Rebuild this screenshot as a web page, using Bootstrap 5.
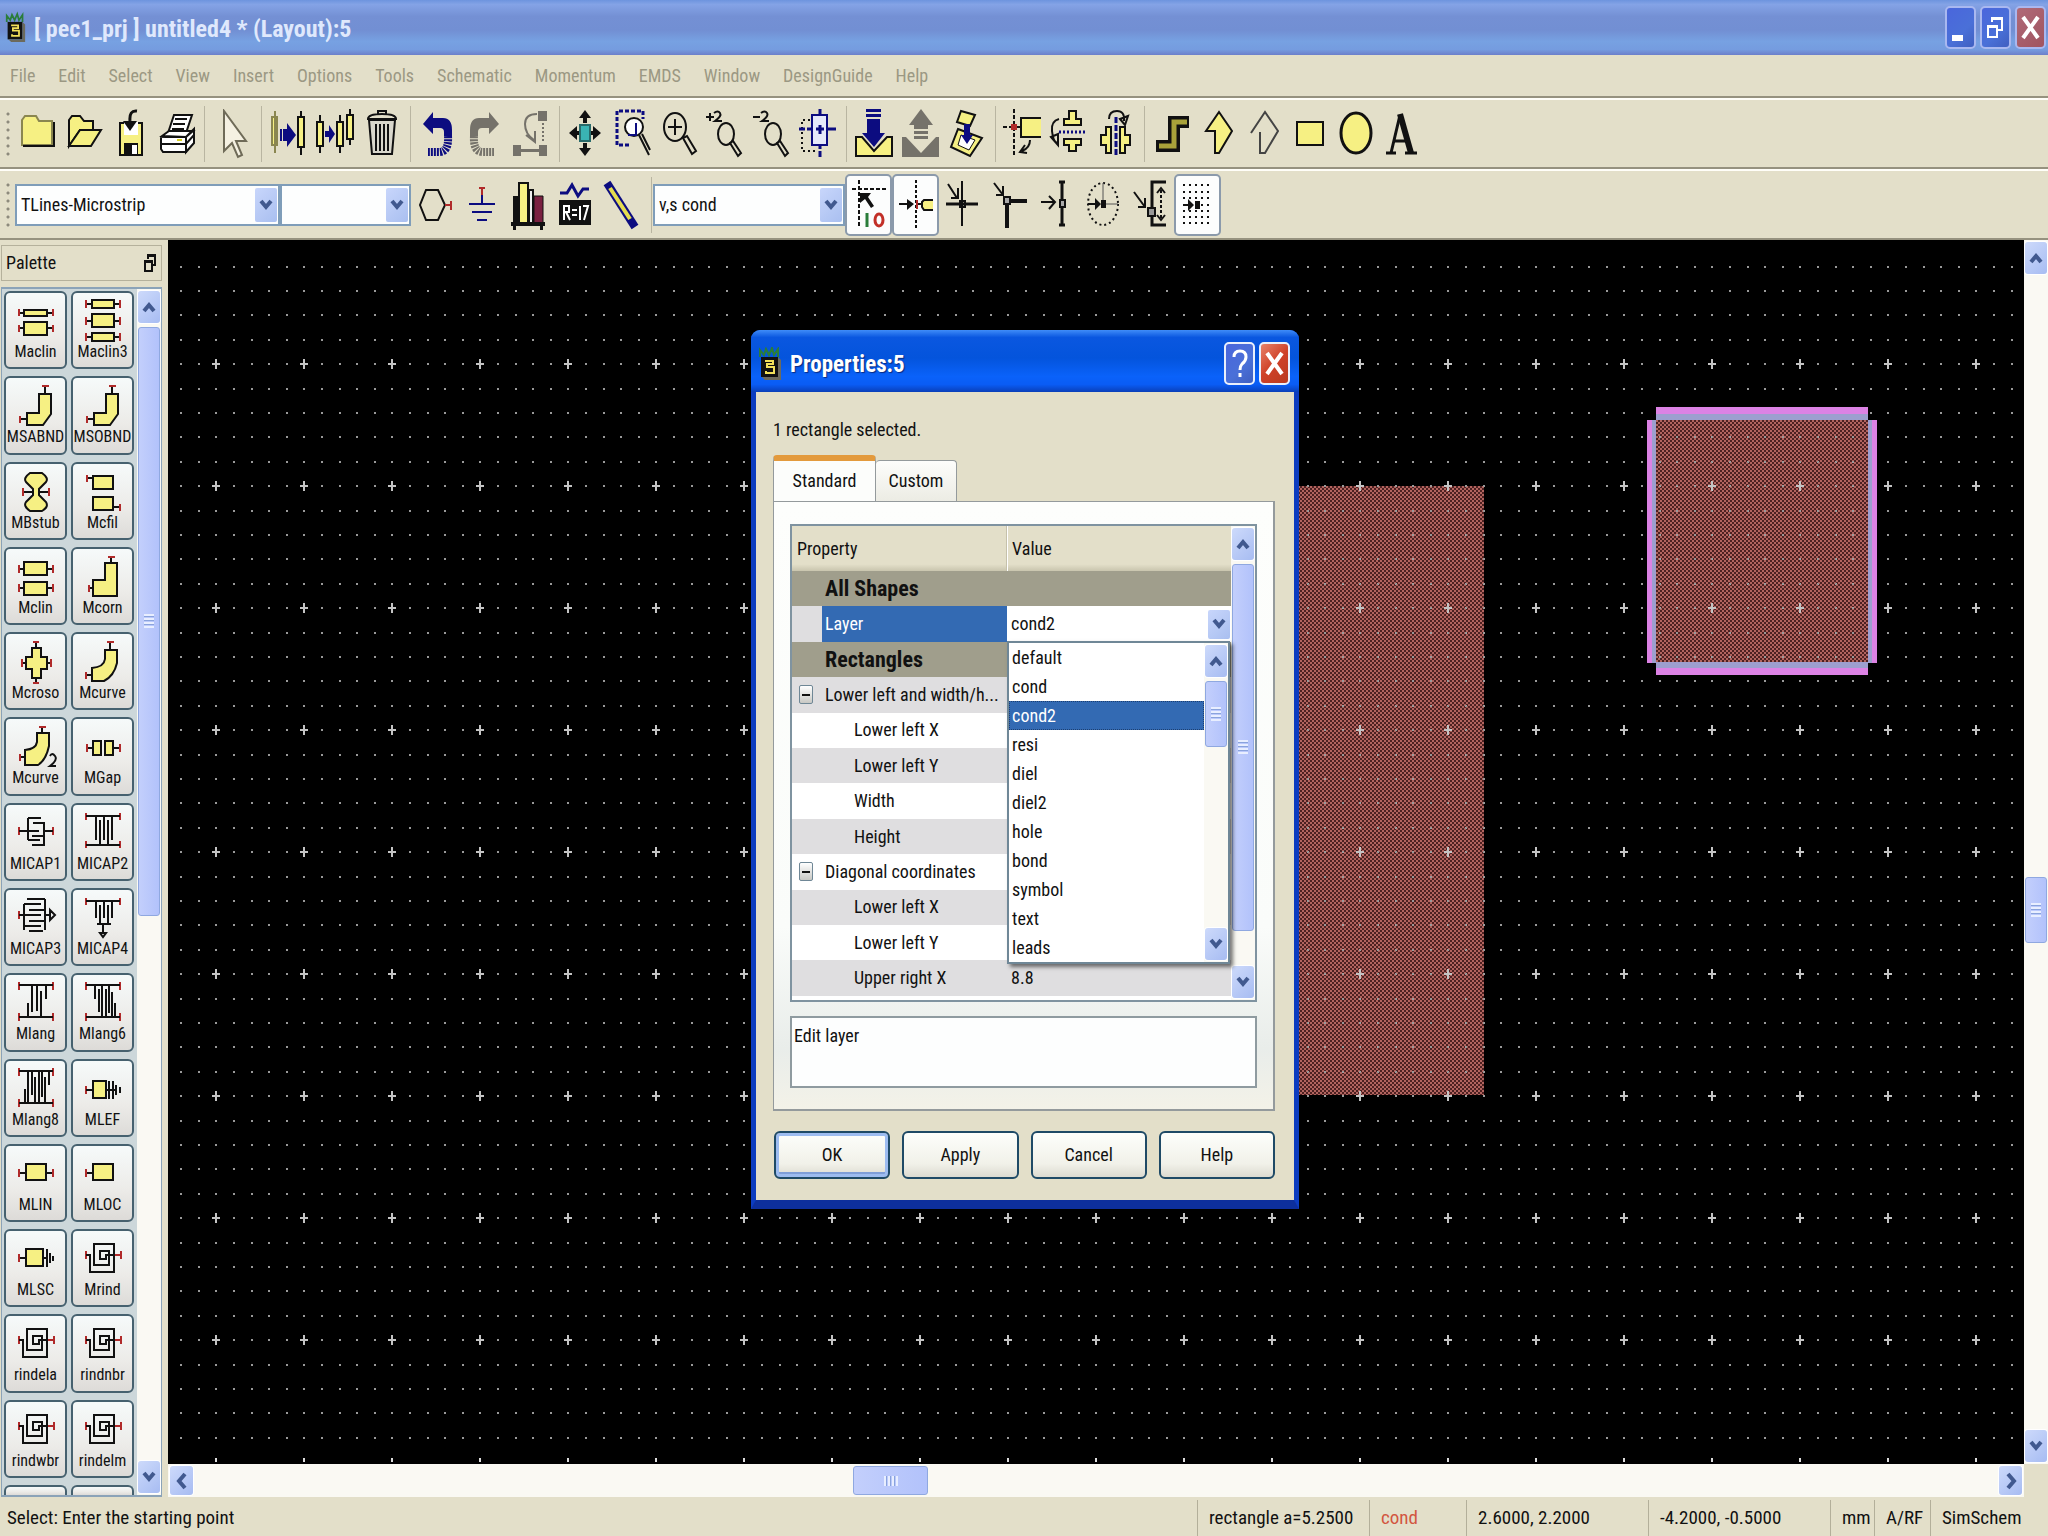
<!DOCTYPE html>
<html lang="en">
<head>
<meta charset="utf-8">
<meta name="viewport" content="width=device-width, initial-scale=1">
<title>[ pec1_prj ] untitled4 * (Layout):5</title>
<link rel="stylesheet" href="https://cdn.jsdelivr.net/npm/bootstrap@5.3.0/dist/css/bootstrap.min.css">
<style>
:root{--face:#e3dfc9;--line:#8f8c7e;--navy:#0c0c80}
body{font-family:"Roboto Condensed",Roboto,"Liberation Sans",sans-serif;font-size:18px;line-height:24px;color:#111;background:var(--face);overflow:hidden;white-space:nowrap}
button,select,input,textarea{font:inherit;color:inherit}
svg{display:block}
.y{fill:#f6f083;stroke:#111;stroke-width:2}
.k{fill:none;stroke:#111;stroke-width:2}
.b{fill:#111}
.r{fill:none;stroke:#b02a2a;stroke-width:2}
.n{fill:none;stroke:var(--navy);stroke-width:2}
.nf{fill:var(--navy)}
.g{fill:none;stroke:#75726a;stroke-width:2}
.gf{fill:#75726a}
.w{fill:#fff;stroke:#111;stroke-width:2}
/* title bar */
.titlebar{height:55px;padding:0 2px 0 5px;background:linear-gradient(#6d94de,#84a3e6 8%,#7490d4 30%,#728fd3 55%,#77a1e2 75%,#759cdf 90%,#6c7fca)}
.titlebar h1{font-size:24px;line-height:28px;padding-top:3px;font-weight:700;color:#dfe8fc}
.winbtn{width:31px;height:43px;padding:0;border:2px solid #a9b8f0;border-radius:5px;background:linear-gradient(135deg,#4a66dc,#4a70d8 60%,#3f5fc0)}
.winbtn.shut{background:linear-gradient(135deg,#b06a78,#a05460)}
/* menus and tool bars */
.menus{height:43px;padding:0 10px;gap:23px;border-bottom:2px solid #96927f;color:#9b9883}
.menus a{color:inherit;text-decoration:none}
.tools{height:71px;border-top:2px solid #fffef8;border-bottom:2px solid #96927f}
.grip{width:15px;height:48px;background:radial-gradient(circle at 8px 4px,#8d8a7c 1px,transparent 2px) 0 0/15px 8px}
.tool{width:46px;height:62px;padding:0;border:2px solid transparent;background:none;border-radius:5px;display:flex;align-items:center;justify-content:center}
.tool svg{flex:none}
.tool.on{background:#fcfdfd;border-color:#8b9aab}
.rule{width:11px;height:56px;background:linear-gradient(#b9b5a1,#b9b5a1) 5px 0/1px 100% no-repeat}
.parts-bar .tool{width:47px}
.parts-bar .rule{width:7px}
.combo{position:relative;height:42px;border:2px solid #7f9db9;background:#fdfefe}
.combo select{appearance:none;width:100%;height:100%;border:0;padding:0 26px 0 4px;background:transparent;outline:0}
.drop{position:absolute;right:1px;top:2px;bottom:2px;width:22px;border-radius:2px;background:linear-gradient(135deg,#c8d6fb,#a9bff0);display:flex;align-items:center;justify-content:center;pointer-events:none}
.c1{width:265px}.c2{width:131px}.c3{width:192px}
/* scroll bars */
.sbar{display:flex;flex:none;background:#faf9f3}
.sbar.v{flex-direction:column;width:24px;padding:2px 1px}
.sbar.h{height:33px;padding:2px}
.sbtn{flex:none;border:0;padding:0;border-radius:3px;background:linear-gradient(135deg,#cddafb,#a7bcf2);display:flex;align-items:center;justify-content:center;box-shadow:0 0 0 1px #fff}
.v>.sbtn{width:100%;height:32px}
.h>.sbtn{height:100%;width:23px}
.knob{flex:none;border-radius:3px;border:1px solid #8fa8e0;background:linear-gradient(90deg,#c3cffc,#b2c2fb);display:flex;align-items:center;justify-content:center}
.knob i{display:block;width:10px;height:14px;background:repeating-linear-gradient(#e8eeff 0 2px,#8aa3dc 2px 3px,transparent 3px 4px)}
.h .knob i{width:14px;height:10px;background:repeating-linear-gradient(90deg,#e8eeff 0 2px,#8aa3dc 2px 3px,transparent 3px 4px)}
/* palette */
.side{width:168px;padding:5px 6px 0 1px}
.sidehead{height:36px;border:1px solid #b5b19c;padding:0 4px;margin-bottom:6px}
.palette{border:1px solid #8ba3b8;border-width:2px 1px;background:#ccd7da;min-height:0}
.partgrid{display:grid;grid-template-columns:63px 63px;grid-template-rows:repeat(14,minmax(0,1fr)) 10px;column-gap:4px;padding:2px 3px 0 2px;overflow:hidden}
.part{margin-bottom:7px;padding:0;border:2px solid #46616f;border-radius:6px;background:linear-gradient(#f6fafa,#ecebe8 60%,#dddbd8);font-size:16px;line-height:18px;display:flex;flex-direction:column;align-items:center;overflow:hidden}
.part:nth-last-child(-n+2){margin-bottom:0;border-bottom:0;border-radius:6px 6px 0 0}
.part svg{flex:none;overflow:visible}
/* canvas */
.stage{background:#000}
.stage>svg{position:absolute;inset:0}
/* dialog */
.dlg{position:absolute;left:583px;top:90px;width:548px;border-radius:9px 9px 0 0;background:#0a49d8;border:5px solid #0c3cc0;border-top:0;border-bottom-width:9px;border-bottom-color:#0d2f9c}
.dlghead{height:62px;margin:0 -5px;padding:5px 9px 0 7px;border-radius:9px 9px 0 0;background:linear-gradient(#3f8cf8,#0a57e0 12%,#0454dc 45%,#0a62fa 75%,#0a5cf4 88%,#0a3fb8)}
.dlghead h2{font-size:23px;line-height:28px;padding-top:3px;font-weight:700;color:#fff;text-shadow:1px 1px 1px #0a2a80}
.dlghead .winbtn{border-color:#e9effc}
.dlghead .shut{background:linear-gradient(135deg,#e8826a,#cf4128 50%,#b93a20)}
.dlgbody{background:var(--face);padding:26px 19px 21px 17px}
.tabs{margin-top:14px;height:45px}
.tabs button{padding:0;border:1px solid #949a9c;border-bottom:0;border-radius:4px 4px 0 0;background:linear-gradient(#fdfdfb,#ececE4)}
.tabs .t1{width:103px;height:46px;border-top:6px solid #e39a3c;background:#fcfdfb;position:relative;z-index:1}
.tabs .t2{width:81px;height:41px;border-left:0}
.pane{border:1px solid #949a9c;border-right-width:2px;border-bottom-width:2px;background:linear-gradient(#fdfefc,#fafcfa 70%,#e9edea 90%,#f3f2e8);padding:22px 16px 21px}
.sheet{border:2px solid #7f93a0;background:#fff;height:478px}
.props{flex:1;width:100%;height:470px;border-collapse:collapse;table-layout:fixed}
.props th,.props td{padding:0;font-weight:400;white-space:nowrap}
.props td{height:35px}
.props thead th{height:45px;background:linear-gradient(var(--face) 85%,#c9c5ae);padding-left:5px}
.props thead th+th{box-shadow:inset 1px 0 #fff,-1px 0 #c5c1ab}
.props .grp{background:#a09e8c;font-weight:700;font-size:22px;padding-left:33px}
.props .alt>*{background:#dfdee0}
.props .top{padding-left:33px;position:relative}
.props .sub{padding-left:62px}
.props .pick{background:linear-gradient(90deg,#dfdee0 30px,#336ab3 30px);color:#fff;padding-left:33px}
.minus{position:absolute;left:7px;top:8px;width:14px;height:19px;padding:0;border:1px solid #6f8796;border-radius:2px;background:linear-gradient(#fff,#c8c8c4)}
.minus::after{content:"";display:block;height:2px;margin:0 2px;background:#111}
.layerbox{position:relative;height:33px;background:#fff}
.layerbox>select{display:block;appearance:none;border:0;width:100%;height:33px;padding:0 26px 0 4px;background:#fff;outline:0}
.menu-list{position:absolute;left:0;top:33px;width:223px;height:323px;background:#fff;border:2px solid #6f8797;box-shadow:3px 3px 4px #0008;z-index:3}
.menu-list ul{list-style:none;margin:0;padding:0;flex:1}
.menu-list li{height:29px;line-height:29px;padding-left:3px}
.menu-list li[aria-selected=true]{background:#336ab3;color:#fff;outline:1px dotted #1d3f70;outline-offset:-1px}
.note{display:block;width:100%;height:72px;margin-top:14px;padding:6px 2px;border:2px solid #8f9ba0;background:#fdfefe;resize:none;outline:0;line-height:24px}
.acts{gap:12px;margin:20px 0 0 1px}
.acts button{flex:1;height:48px;padding:0;border:2px solid #1f4a66;border-radius:6px;background:linear-gradient(#fdfefb,#f1f1e9 70%,#dcdad0)}
.acts .dflt{box-shadow:inset 0 0 0 3px #9dbcf0,inset 0 -5px 0 #7f9ed8}
/* status bar */
.status{height:39px;padding:3px 0 0 7px;font-size:19px}
.cell{height:36px;border-left:1px solid #b3af9a;padding-left:11px;line-height:36px;flex:none}
.s1{width:172px}.s2{width:97px;color:#d2553f}.s3{width:182px}.s4{width:44px}.s5{width:56px}.s6{width:118px}
</style>
<script src="https://cdn.jsdelivr.net/npm/bootstrap@5.3.0/dist/js/bootstrap.bundle.min.js"></script>
</head>
<body class="vh-100 d-flex flex-column">
<svg width="0" height="0" class="position-absolute" aria-hidden="true">
<defs>
<symbol id="app" viewBox="0 0 24 34"><path d="M2 10V3l4 5 2-6 3 6 3-7 2 7 4-6v8" fill="none" stroke="#2a7d3a" stroke-width="2"/><rect x="3" y="10" width="17" height="20" fill="#111"/><path d="M20 10l3 3v20H7l-3-3h16z" fill="#6c6a5c"/><path d="M7 14h8v3H9v3h7v6H8v-2" fill="none" stroke="#f2e05a" stroke-width="2"/></symbol>
<symbol id="dn" viewBox="0 0 14 14"><path d="M2 3l5 6 5-6" fill="none" stroke="#41598f" stroke-width="4"/></symbol>
<symbol id="up" viewBox="0 0 14 14"><path d="M2 11l5-6 5 6" fill="none" stroke="#41598f" stroke-width="4"/></symbol>
<symbol id="lf" viewBox="0 0 14 18"><path d="M10 2L4 9l6 7" fill="none" stroke="#41598f" stroke-width="4"/></symbol>
<symbol id="rt" viewBox="0 0 14 18"><path d="M4 2l6 7-6 7" fill="none" stroke="#41598f" stroke-width="4"/></symbol>
<symbol id="spiral" viewBox="0 0 62 50"><path class="r" d="M14 20v8M49 20v8M43 24h6"/><path class="k" d="M14 24h4v17h24V13H22v21h15V20h-9v8h6v-4h9"/></symbol>
<pattern id="dots" patternUnits="userSpaceOnUse" x="4" y="63" width="88" height="122"><g fill="#999"><path id="drow" d="M8 11h2v2H8zM26 11h2v2h-2zM43 11h2v2h-2zM61 11h2v2h-2zM79 11h2v2h-2z"/><use href="#drow" y="25"/><use href="#drow" y="49"/><use href="#drow" y="74"/><use href="#drow" y="98"/></g><path d="M44 56v10M40 61h8" stroke="#c4c4c4" stroke-width="2"/></pattern>
<pattern id="weave" patternUnits="userSpaceOnUse" width="4" height="4"><rect width="4" height="4" fill="#4d2121"/><path d="M0 0h2v2H0zM2 2h2v2H2z" fill="#b2645f"/></pattern>
</defs></svg>

<header>
<div class="titlebar d-flex align-items-center">
<svg width="21" height="34"><use href="#app"/></svg>
<h1 class="m-0 ms-2 flex-grow-1">[ pec1_prj ] untitled4 * (Layout):5</h1>
<div class="d-flex gap-1">
<button class="winbtn" aria-label="Minimize"><svg width="27" height="39"><path d="M5 27h11v6H5z" fill="#fff"/></svg></button>
<button class="winbtn" aria-label="Restore"><svg width="27" height="39" fill="none" stroke="#fff" stroke-width="2"><path d="M10 14V10h10v12h-4M6 18h9v11H6zM10 11h10M6 19h9"/></svg></button>
<button class="winbtn shut" aria-label="Close"><svg width="27" height="39"><path d="M6 9l15 21M21 9L6 30" stroke="#fff" stroke-width="4"/></svg></button>
</div></div>
<nav class="menus d-flex align-items-center" aria-label="Main menu">
<a href="#">File</a><a href="#">Edit</a><a href="#">Select</a><a href="#">View</a><a href="#">Insert</a><a href="#">Options</a><a href="#">Tools</a><a href="#">Schematic</a><a href="#">Momentum</a><a href="#">EMDS</a><a href="#">Window</a><a href="#">DesignGuide</a><a href="#">Help</a>
</nav>
<div class="tools d-flex align-items-center" role="toolbar" aria-label="Edit tools">
<span class="grip"></span>
<button class="tool" aria-label="New"><svg width="46" height="50"><path d="M7 36V11l3-4h11l3 5h13v24z" fill="#f6f083" stroke="#8a8650" stroke-width="2"/><path class="k" d="M8 37h31V13"/></svg></button>
<button class="tool" aria-label="Open"><svg width="46" height="50"><path class="y" d="M8 37V11l3-4h8l4 5h9v9H19z"/><path class="y" d="M8 37l11-16h21L30 37z"/></svg></button>
<button class="tool" aria-label="Save"><svg width="46" height="50"><path class="y" d="M13 14h22v32H13z"/><path d="M17 13h14v13H17z" fill="#fff"/><path class="b" d="M17 34h14v12H17z"/><path d="M25 36h5v9h-5z" fill="#fff"/><path d="M30 2q-8-1-7 10" fill="none" stroke="#111" stroke-width="3"/><path class="b" d="M16 12h14l-7 10z"/></svg></button>
<button class="tool" aria-label="Print"><svg width="46" height="50"><path class="w" d="M15 24l6-18h18l-6 18z"/><path class="k" d="M22 10h12M20 15h12M19 20h12"/><path class="w" d="M9 27l7-5h24l-7 6zM8 28h25v15H10l-2-3zM33 28l8-8v14l-8 9z"/><path class="k" d="M8 35h25l8-9"/><path d="M24 31h5" stroke="#d8d020" stroke-width="2"/></svg></button>
<span class="rule"></span>
<button class="tool" aria-label="Pointer"><svg width="46" height="50"><path d="M14 2v40l8-8 6 14 4-2-6-14h10z" fill="#f5f1e2" stroke="#6f6b58" stroke-width="2"/></svg></button>
<span class="rule"></span>
<button class="tool" aria-label="Move"><svg width="46" height="50"><path d="M8 2v42M5 8h5v28H5z" fill="#f6f083" stroke="#8a8650" stroke-width="2"/><path class="k" d="M34 2v44"/><path class="y" d="M31 8h6v30h-6z"/><path class="nf" d="M13 20h2v12h-2zM16 20h4v-6l9 12-9 12v-6h-4z"/></svg></button>
<button class="tool" aria-label="Copy"><svg width="46" height="50"><path class="k" d="M7 6v38M27 6v38M37 0v36"/><path class="y" d="M4 13h6v24H4zM24 13h6v24h-6zM34 6h6v24h-6z"/><path class="nf" d="M12 22h4v-6l6 9-6 9v-6h-4z"/></svg></button>
<button class="tool" aria-label="Delete"><svg width="46" height="50"><path d="M10 11h26l-3 34H13z" fill="#d9d7cc" stroke="#111" stroke-width="2"/><path class="k" d="M17 15v27M21 15v27M25 15v27M29 15v27M9 10q0-5 14-5t14 5zM19 5V2h8v3"/></svg></button>
<span class="rule"></span>
<button class="tool" aria-label="Undo"><svg width="46" height="50"><path class="nf" d="M7 15L17 3v6h10q9 0 9 12v6h-8v-4q0-4-4-4h-7v6z"/><path d="M32 27q1 16-9 16h-11" fill="none" stroke="#0c0c80" stroke-width="8" stroke-dasharray="2 1"/></svg></button>
<button class="tool" aria-label="Redo"><svg width="46" height="50"><path class="gf" d="M37 15L27 3v6H17q-9 0-9 12v6h8v-4q0-4 4-4h7v6z"/><path d="M12 27q-1 16 9 16h11" fill="none" stroke="#75726a" stroke-width="8" stroke-dasharray="2 1"/></svg></button>
<button class="tool" aria-label="Rotate"><svg width="46" height="50"><path class="gf" d="M30 2h9v10h-9zM5 36h8v11H5zM31 36h8v11h-8zM11 40h22v3H11z"/><path class="g" d="M35 14v20" stroke-dasharray="2 2"/><path class="g" d="M29 5q-12 0-12 10t9 16M18 26l9 7V22"/></svg></button>
<span class="rule"></span>
<button class="tool" aria-label="Fit all"><svg width="46" height="50"><path d="M15 16h10v16H15z" fill="#3ab4b4" stroke="#286a6a" stroke-width="2"/><path class="b" d="M20 1l6 8h-4v5h-4V9h-4zM20 47l6-8h-4v-5h-4v5h-4zM4 24l8-7v5h2v4h-2v5zM36 24l-8-7v5h-2v4h2v5z"/></svg></button>
<button class="tool" aria-label="Zoom area"><svg width="46" height="50"><path d="M30 2H6v34h14M32 2v8" fill="none" stroke="#0c0c80" stroke-width="3" stroke-dasharray="4 2"/><circle cx="23" cy="18" r="9" fill="#fff" stroke="#111" stroke-width="2"/><path class="n" d="M17 26h8V14"/><path class="k" d="M28 26l10 20M31 25l8 16"/></svg></button>
<button class="tool" aria-label="Zoom in"><svg width="46" height="50"><ellipse class="k" cx="18" cy="18" rx="11" ry="14"/><path class="k" d="M18 10v16M11 18h14M26 29l9 16 4-3-9-15z"/></svg></button>
<button class="tool" aria-label="Zoom in by 2"><svg width="46" height="50"><path class="k" d="M3 8h8M7 4v8M11 4q4-3 6 0t-5 8h7"/><ellipse class="k" cx="23" cy="25" rx="8" ry="11"/><path class="k" d="M27 34l8 13 3-3-8-12z"/></svg></button>
<button class="tool" aria-label="Zoom out by 2"><svg width="46" height="50"><path class="k" d="M4 8h7M12 4q4-3 6 0t-5 8h7"/><ellipse class="k" cx="24" cy="25" rx="8" ry="11"/><path class="k" d="M28 34l8 13 3-3-8-12z"/></svg></button>
<button class="tool" aria-label="Pan"><svg width="46" height="50"><path class="k" stroke-dasharray="2 3" d="M20 11H7v31h14"/><path d="M17 6h15v30H17z" fill="#e6e9fa" stroke="#0c0c80" stroke-width="2"/><path d="M25 0v6M25 36v4M25 42v6M4 20h6M12 20h5M32 20h9M21 20h8M25 16v9" stroke="#0c0c80" stroke-width="3"/></svg></button>
<span class="rule"></span>
<button class="tool" aria-label="Push"><svg width="46" height="50"><path class="y" d="M4 28h6l12 14 13-14h5v19H4z"/><path class="nf" d="M14 0h15v3H14zM14 5h15v3H14zM15 10h13v14h5L22 38 10 24h5z"/></svg></button>
<button class="tool" aria-label="Pop"><svg width="46" height="50"><path class="gf" d="M4 28h4l15 16 15-16h3v20H4zM23 0l12 16h-5v4H16v-4h-5zM16 22h14v3H16zM16 27h14v3H16z"/></svg></button>
<button class="tool" aria-label="Hierarchy"><svg width="46" height="50"><path class="y" d="M17 2l14 4-5 11-13-4z"/><path class="y" d="M14 20l24 9-12 18-19-9z"/><path d="M17 26l14 5-6 10-11-5z" fill="#fff" stroke="#111"/><path class="nf" d="M20 15h6v11h3l-6 9-6-9h3z"/></svg></button>
<span class="rule"></span>
<button class="tool" aria-label="Rotate shape"><svg width="46" height="50"><path class="k" stroke-dasharray="4 2" d="M13 0v48M2 18h12"/><path d="M40 9H20v19h20z" fill="#f6f083"/><path class="k" d="M40 9H20v19h20M14 18h6"/><path d="M10 15h6v6h-6z" fill="#b02a2a"/><path class="k" d="M29 31q0 8-8 11M24 36l-5 7 7 1"/></svg></button>
<button class="tool" aria-label="Mirror vertically"><svg width="46" height="50"><path class="y" d="M22 2h7v8h5v6H17v-6h5zM22 42h7v-6h5v-6H17v6h5z"/><path d="M12 23h28" stroke="#0c0c80" stroke-width="3" stroke-dasharray="2 2"/><path class="k" d="M12 10q-8 2-7 12t5 12M4 28l7 8V25z"/></svg></button>
<button class="tool" aria-label="Mirror horizontally"><svg width="46" height="50"><path class="y" d="M13 18h5v26h-5v-8H8V26h5zM32 18h-5v26h5v-8h5V26h-5z"/><path d="M23 8v40" stroke="#0c0c80" stroke-width="3" stroke-dasharray="6 2"/><path class="k" d="M16 10q0-8 8-8t7 10M27 10l5 6 3-9z"/></svg></button>
<span class="rule"></span>
<button class="tool" aria-label="Trace"><svg width="46" height="50"><path d="M39 13H24v24H6" fill="none" stroke="#111" stroke-width="12"/><path d="M37 13H24v24H9" fill="none" stroke="#a8a23a" stroke-width="5"/></svg></button>
<button class="tool" aria-label="Polygon"><svg width="46" height="50"><path class="y" d="M23 3l13 19-13 22h-4V22h-9z"/></svg></button>
<button class="tool" aria-label="Polyline"><svg width="46" height="50"><path d="M9 24L23 3l13 19-13 22h-5V23" fill="none" stroke="#444" stroke-width="2"/></svg></button>
<button class="tool" aria-label="Rectangle"><svg width="46" height="50"><path class="y" d="M9 13h26v23H9z"/></svg></button>
<button class="tool" aria-label="Circle"><svg width="46" height="50"><ellipse cx="22" cy="24" rx="15" ry="20" fill="#f6f083" stroke="#111" stroke-width="3"/></svg></button>
<button class="tool" aria-label="Text"><svg width="46" height="50"><path d="M6 44h10M25 44h12M11 44L20 6M13 32h14" fill="none" stroke="#111" stroke-width="3"/><path d="M20 5l11 39" stroke="#111" stroke-width="6"/></svg></button>
</div>
<div class="tools parts-bar d-flex align-items-center" role="toolbar" aria-label="Component tools">
<span class="grip"></span>
<div class="combo c1"><select aria-label="Palette library"><option>TLines-Microstrip</option></select><span class="drop"><svg width="14" height="14"><use href="#dn"/></svg></span></div>
<div class="combo c2"><select aria-label="Component"><option></option></select><span class="drop"><svg width="14" height="14"><use href="#dn"/></svg></span></div>
<button class="tool" aria-label="Port"><svg width="46" height="50"><path class="k" d="M14 10h12l7 15-7 15H14L8 25z"/><path class="r" d="M33 25h5M39 21v9"/></svg></button>
<button class="tool" aria-label="Ground"><svg width="46" height="50"><path class="r" d="M23 8v10M20 8h6"/><path d="M23 15v8M10 24h26M13 32h20M18 40h10" stroke="#0c0c80" stroke-width="2"/></svg></button>
<button class="tool" aria-label="Library"><svg width="46" height="50"><path class="b" d="M7 16h6v28H7z"/><path class="y" d="M13 3h9v40h-9z"/><path d="M23 10h4v33h-4z" fill="#eee" stroke="#111" stroke-width="2"/><path d="M28 16h9v27h-9z" fill="#7a2040" stroke="#111"/><path class="b" d="M5 42h34v4H5zM7 46h3v4H7zM34 46h3v4h-3z"/></svg></button>
<button class="tool" aria-label="Variable"><svg width="46" height="50"><path d="M7 13h7l5-8 6 11 5-7h6" fill="none" stroke="#0c0c80" stroke-width="3"/><path class="b" d="M6 20h32v25H6z"/><path d="M11 40V26h5v6h-5M13 32l4 8M19 30h5M19 35h5M27 26v14M30 26h5l-4 14" fill="none" stroke="#fff" stroke-width="2"/></svg></button>
<button class="tool" aria-label="Wire"><svg width="46" height="50"><path d="M7 3L35 47" stroke="#0c0c80" stroke-width="8"/><path d="M10 8l20 31" stroke="#e5dc50" stroke-width="4"/></svg></button>
<span class="rule"></span>
<div class="combo c3"><select aria-label="Entry layer"><option>v,s cond</option></select><span class="drop"><svg width="14" height="14"><use href="#dn"/></svg></span></div>
<button class="tool on" aria-label="Snap enabled"><svg width="46" height="50"><path class="k" stroke-dasharray="4 2" d="M13 0v48M6 9h34"/><path class="b" d="M14 13h11l-3 4 6 9-3 2-6-9-5 4z"/><path d="M21 33v14" stroke="#2a7d3a" stroke-width="3"/><ellipse cx="33" cy="40" rx="4" ry="6" fill="none" stroke="#c23028" stroke-width="3"/></svg></button>
<button class="tool on" aria-label="Pin snap"><svg width="46" height="50"><path class="k" stroke-dasharray="3 2" d="M23 0v48"/><path class="k" d="M6 24h12M24 24h6"/><path class="b" d="M14 19l7 5-7 6z"/><path class="y" d="M40 20H31l-2 2v5l2 3h9"/><path class="r" d="M24 20v9"/></svg></button>
<button class="tool" aria-label="Vertex snap"><svg width="46" height="50"><path class="k" d="M22 1v45M8 4l9 14M11 18h7V8"/><path d="M6 24h32" stroke="#111" stroke-width="3"/><path class="k" d="M20 21h5v6h-5z"/></svg></button>
<button class="tool" aria-label="Corner snap"><svg width="46" height="50"><path d="M20 48V21h20" fill="none" stroke="#111" stroke-width="4"/><path class="k" d="M7 3l9 12M9 15h7V6"/><path d="M17 17h6v7h-6z" fill="#aaa" stroke="#111" stroke-width="2"/></svg></button>
<button class="tool" aria-label="Edge snap"><svg width="46" height="50"><path d="M28 2v43M25 2h6M25 45h6" stroke="#111" stroke-width="3"/><path class="k" d="M7 22h13M15 16l6 6-6 7"/><path d="M26 20h5v7h-5z" fill="#aaa" stroke="#111" stroke-width="2"/></svg></button>
<button class="tool" aria-label="Centre snap"><svg width="46" height="50"><ellipse class="k" stroke-dasharray="2 3" cx="22" cy="24" rx="15" ry="21"/><path d="M22 3v21h15" fill="none" stroke="#555"/><path class="k" d="M7 24h9"/><path class="b" d="M14 18l6 6-6 6zM20 20h5v8h-5z"/></svg></button>
<button class="tool" aria-label="Intersection snap"><svg width="46" height="50"><path d="M38 2H24v43h14" fill="none" stroke="#111" stroke-width="3"/><path class="k" d="M6 12l11 15M10 27h7V18"/><path class="k" stroke-dasharray="3 2" d="M33 10v28"/><path class="k" d="M29 13l4-5 4 5M29 35l4 5 4-5"/><path d="M20 28h7v8h-7z" fill="#999" stroke="#111" stroke-width="2"/></svg></button>
<button class="tool on" aria-label="Grid snap"><svg width="46" height="50"><path class="k" stroke-dasharray="2 4" d="M8 5h30M8 12h30M8 18h30M26 25h12M8 31h30M8 37h30M8 43h30"/><path class="k" d="M8 25h8"/><path class="b" d="M13 19l6 6-6 6zM20 21h5v8h-5z"/></svg></button>
</div>
</header>

<main class="d-flex flex-grow-1" style="min-height:0">
<aside class="side d-flex flex-column">
<div class="sidehead d-flex align-items-center justify-content-between"><span>Palette</span><svg width="14" height="20"><path class="k" d="M5 6V2h7v10H9M2 8h7v10H2zM5 3h7M2 9h7"/></svg></div>
<div class="palette d-flex flex-grow-1">
<div class="partgrid flex-grow-1">
<button class="part"><svg width="62" height="50"><path class="k" d="M14 20h34M14 35h34"/><path class="r" d="M14 16v7M48 16v7M14 32v7M48 32v7"/><path class="y" d="M19 17h23v6H19zM19 29h23v13H19z"/></svg>Maclin</button>
<button class="part"><svg width="62" height="50"><path class="k" d="M14 11h34M14 28h34M14 44h34"/><path class="r" d="M14 7v8M48 7v8M14 24v8M48 24v8M14 40v8M48 40v8"/><path class="y" d="M20 7h22v8H20zM20 21h22v13H20zM20 40h22v8H20z"/></svg>Maclin3</button>
<button class="part"><svg width="62" height="50"><path class="k" d="M40 8v9M15 41h8"/><path class="r" d="M37 8h7M15 38v7"/><path class="y" d="M34 16h12v20l-8 11H22V35h12z"/></svg>MSABND</button>
<button class="part"><svg width="62" height="50"><path class="k" d="M40 8v9M15 41h8"/><path class="r" d="M37 8h7M15 38v7"/><path class="y" d="M34 16h12v20l-8 11H22V35h12z"/></svg>MSOBND</button>
<button class="part"><svg width="62" height="50"><path class="k" d="M18 28h26"/><path class="r" d="M18 24v8M44 24v8"/><path class="y" d="M25 9h12q7 5 4 9l-7 7v6l7 7q3 5-4 9H25q-7-5-4-9l7-7v-6l-7-7q-3-4 4-9z"/></svg>MBstub</button>
<button class="part"><svg width="62" height="50"><path class="k" d="M15 14h7M40 43h8"/><path class="r" d="M15 11v7M48 40v7"/><path class="y" d="M21 12h20v13H21zM21 33h20v13H21z"/></svg>Mcfil</button>
<button class="part"><svg width="62" height="50"><path class="k" d="M14 20h34M14 39h34"/><path class="r" d="M14 16v8M48 16v8M14 35v8M48 35v8"/><path class="y" d="M19 13h23v13H19zM19 33h23v13H19z"/></svg>Mclin</button>
<button class="part"><svg width="62" height="50"><path class="k" d="M39 8v8M16 39h8"/><path class="r" d="M36 8h7M17 36v7"/><path class="y" d="M33 14h12v33H21V31h12z"/></svg>Mcorn</button>
<button class="part"><svg width="62" height="50"><path class="k" d="M17 29h28M31 8v41"/><path class="r" d="M17 25v8M46 25v8M28 8h6M28 49h6"/><path class="y" d="M27 14h9v9h6v12h-6v9h-9v-9h-6V23h6z"/></svg>Mcroso</button>
<button class="part"><svg width="62" height="50"><path class="k" d="M38 8v8M14 41h8"/><path class="r" d="M35 8h7M14 38v7"/><path class="y" d="M33 16h12v13q-3 13-13 18H20V34q12-1 13-9z"/></svg>Mcurve</button>
<button class="part"><svg width="62" height="50"><path class="k" d="M37 8v8M15 38h6"/><path class="r" d="M34 8h7M15 35v7"/><path class="y" d="M32 14h12v13q-3 14-11 19H20V31q11-1 12-8z"/><path class="k" d="M45 37q2-4 5 0t-5 10h6"/></svg>Mcurve</button>
<button class="part"><svg width="62" height="50"><path class="k" d="M15 29h33"/><path class="r" d="M15 25v8M48 25v8"/><path d="M28 28h6v2h-6z" fill="#f2f2f0"/><path class="y" d="M21 22h8v14h-8zM33 22h8v14h-8z"/></svg>MGap</button>
<button class="part"><svg width="62" height="50"><path class="r" d="M14 22v8M48 22v8"/><path class="k" d="M14 26h9M40 26h8M23 13v22M23 13h13M23 26h11M23 35h12M39 17v24M39 18H28M39 31H27M39 40H27"/></svg>MICAP1</button>
<button class="part"><svg width="62" height="50"><path class="r" d="M14 8v7M48 8v7M14 36v7M48 36v7"/><path class="k" d="M14 11h34M14 40h34M24 11v24M28 15v25M32 11v24M36 15v25M40 11v24"/></svg>MICAP2</button>
<button class="part"><svg width="62" height="50"><path class="r" d="M14 21v8"/><path class="k" d="M14 25h5M19 14v26M19 14h17M19 25h17M19 36h17M40 9v31M22 9h18M24 20h16M24 31h16M24 41h14M41 25h4M45 20l5 5-5 5z"/></svg>MICAP3</button>
<button class="part"><svg width="62" height="50"><path class="r" d="M14 8v7M48 8v7"/><path class="k" d="M14 11h34M24 11v17M28 15v19M32 11v17M36 15v19M40 11v17M25 34h14M31 34v9M28 43h6l-3 4z"/></svg>MICAP4</button>
<button class="part"><svg width="62" height="50"><path class="r" d="M14 7v8M48 7v8M14 38v8M48 38v8"/><path class="k" d="M14 10h34M14 42h34M32 10v26M41 10v14M23 42V28M27 37V10M36 42V16"/></svg>Mlang</button>
<button class="part"><svg width="62" height="50"><path class="r" d="M14 7v8M48 7v8M14 38v8M48 38v8"/><path class="k" d="M14 10h34M14 42h34M23 10v14M27 14v23M30 10v32M34 14v28M37 10v28M40 17v25M43 28v14"/></svg>Mlang6</button>
<button class="part"><svg width="62" height="50"><path class="r" d="M14 7v8M48 7v8M14 38v8M48 38v8"/><path class="k" d="M14 10h34M14 42h34M20 28v14M23 10v32M27 10v24M30 16v26M34 10v32M37 10v26M40 16v26M44 10v14"/></svg>Mlang8</button>
<button class="part"><svg width="62" height="50"><path class="r" d="M14 25v8"/><path class="k" d="M14 29h30M37 20v18M41 20v18M44 24v10M48 26v6"/><path class="y" d="M21 20h13v17H21z"/></svg>MLEF</button>
<button class="part"><svg width="62" height="50"><path class="k" d="M14 27h34"/><path class="r" d="M14 23v8M48 23v8"/><path class="y" d="M21 18h20v16H21z"/></svg>MLIN</button>
<button class="part"><svg width="62" height="50"><path class="k" d="M14 27h8"/><path class="r" d="M14 23v8"/><path class="y" d="M21 18h20v16H21z"/></svg>MLOC</button>
<button class="part"><svg width="62" height="50"><path class="k" d="M14 27h27M42 18v18M45 22v10M48 25v5"/><path class="r" d="M14 23v8"/><path class="y" d="M21 18h17v17H21z"/></svg>MLSC</button>
<button class="part"><svg width="62" height="50"><use href="#spiral"/></svg>Mrind</button>
<button class="part"><svg width="62" height="50"><use href="#spiral"/></svg>rindela</button>
<button class="part"><svg width="62" height="50"><use href="#spiral"/></svg>rindnbr</button>
<button class="part"><svg width="62" height="50"><use href="#spiral"/></svg>rindwbr</button>
<button class="part"><svg width="62" height="50"><use href="#spiral"/></svg>rindelm</button>
<button class="part" aria-label="More"></button>
<button class="part" aria-label="More"></button>
</div>
<div class="sbar v">
<button class="sbtn" aria-label="Scroll up"><svg width="14" height="14"><use href="#up"/></svg></button>
<div class="knob my-1" style="height:49%"><i></i></div><span class="flex-grow-1"></span>
<button class="sbtn" aria-label="Scroll down"><svg width="14" height="14"><use href="#dn"/></svg></button>
</div>
</div>
</aside>
<section class="d-flex flex-column flex-grow-1" style="min-width:0">
<div class="d-flex flex-grow-1">
<div class="stage position-relative flex-grow-1">
<svg width="100%" height="100%" aria-label="Layout canvas">
<rect x="700" y="246" width="616" height="609" fill="url(#weave)"/>
<rect x="1488" y="180" width="212" height="242" fill="url(#weave)"/>
<rect x="8" y="12" width="1840" height="1205" fill="url(#dots)"/>
<path d="M48 1218v4M136 1218v4M224 1218v4M312 1218v4M400 1218v4M488 1218v4M576 1218v4M664 1218v4M752 1218v4M840 1218v4M928 1218v4M1016 1218v4M1104 1218v4M1192 1218v4M1280 1218v4M1368 1218v4M1456 1218v4M1544 1218v4M1632 1218v4M1720 1218v4M1808 1218v4" stroke="#ddd" stroke-width="2"/>
<path d="M1488 167h212v7h-212zM1488 428h212v7h-212zM1479 180h5v243h-5zM1704 180h5v243h-5z" fill="#dc82e4"/>
<path d="M1488 174h212v6h-212zM1488 422h212v6h-212zM1484 180h4v243h-4zM1700 180h4v243h-4z" fill="#9d9fcf"/>
</svg>

<div class="dlg" role="dialog" aria-labelledby="dlgtitle">
<div class="dlghead d-flex align-items-center gap-1">
<svg width="24" height="34"><use href="#app"/></svg>
<h2 id="dlgtitle" class="m-0 ms-1 flex-grow-1">Properties:5</h2>
<button class="winbtn" aria-label="Help"><svg width="27" height="39"><path d="M8 13q0-6 6-6t6 6q0 4-4 7-2 2-2 6M14 29v4" fill="none" stroke="#fff" stroke-width="3"/></svg></button>
<button class="winbtn shut" aria-label="Close"><svg width="27" height="39"><path d="M6 9l15 21M21 9L6 30" stroke="#fff" stroke-width="4"/></svg></button>
</div>
<div class="dlgbody">
<div>1 rectangle selected.</div>
<div class="tabs d-flex align-items-end" role="tablist"><button class="t1" role="tab" aria-selected="true">Standard</button><button class="t2" role="tab">Custom</button></div>
<div class="pane">
<div class="sheet d-flex">
<table class="props">
<colgroup><col style="width:49%"><col></colgroup>
<thead><tr><th>Property</th><th>Value</th></tr></thead>
<tbody>
<tr><td class="grp" colspan="2">All Shapes</td></tr>
<tr><td class="pick">Layer</td><td>
<div class="layerbox"><select aria-label="Layer"><option>cond2</option></select><span class="drop"><svg width="14" height="14"><use href="#dn"/></svg></span>
<div class="menu-list d-flex"><ul role="listbox" aria-label="Layers"><li role="option">default</li><li role="option">cond</li><li role="option" aria-selected="true">cond2</li><li role="option">resi</li><li role="option">diel</li><li role="option">diel2</li><li role="option">hole</li><li role="option">bond</li><li role="option">symbol</li><li role="option">text</li><li role="option">leads</li></ul>
<div class="sbar v"><button class="sbtn" aria-label="Scroll up"><svg width="14" height="14"><use href="#up"/></svg></button><div class="knob my-1" style="height:21%"><i></i></div><span class="flex-grow-1"></span><button class="sbtn" aria-label="Scroll down"><svg width="14" height="14"><use href="#dn"/></svg></button></div></div>
</div></td></tr>
<tr><td class="grp" colspan="2">Rectangles</td></tr>
<tr class="alt"><td class="top"><button class="minus" aria-label="Collapse"></button>Lower left and width/h...</td><td></td></tr>
<tr><td class="sub">Lower left X</td><td></td></tr>
<tr class="alt"><td class="sub">Lower left Y</td><td></td></tr>
<tr><td class="sub">Width</td><td></td></tr>
<tr class="alt"><td class="sub">Height</td><td></td></tr>
<tr><td class="top"><button class="minus" aria-label="Collapse"></button>Diagonal coordinates</td><td></td></tr>
<tr class="alt"><td class="sub">Lower left X</td><td></td></tr>
<tr><td class="sub">Lower left Y</td><td></td></tr>
<tr class="alt"><td class="sub">Upper right X</td><td class="ps-1">8.8</td></tr>
</tbody></table>
<div class="sbar v"><button class="sbtn" aria-label="Scroll up"><svg width="14" height="14"><use href="#up"/></svg></button><div class="knob my-1" style="height:78%"><i></i></div><span class="flex-grow-1"></span><button class="sbtn" aria-label="Scroll down"><svg width="14" height="14"><use href="#dn"/></svg></button></div>
</div>
<textarea class="note" aria-label="Description" readonly>Edit layer</textarea>
</div>
<div class="acts d-flex"><button class="dflt">OK</button><button>Apply</button><button>Cancel</button><button>Help</button></div>
</div>
</div>
</div>
<div class="sbar v">
<button class="sbtn" aria-label="Scroll up"><svg width="14" height="14"><use href="#up"/></svg></button>
<span style="flex:601"></span><div class="knob" style="height:66px"><i></i></div><span style="flex:486"></span>
<button class="sbtn" aria-label="Scroll down"><svg width="14" height="14"><use href="#dn"/></svg></button>
</div>
</div>
<div class="d-flex">
<div class="sbar h flex-grow-1">
<button class="sbtn" aria-label="Scroll left"><svg width="14" height="18"><use href="#lf"/></svg></button>
<span style="flex:660"></span><div class="knob" style="width:75px"><i></i></div><span style="flex:1071"></span>
<button class="sbtn" aria-label="Scroll right"><svg width="14" height="18"><use href="#rt"/></svg></button>
</div><span style="width:24px"></span></div>
</section>
</main>
<footer class="status d-flex align-items-center"><span class="flex-grow-1">Select: Enter the starting point</span>
<span class="cell s1">rectangle a=5.2500</span><span class="cell s2">cond</span><span class="cell s3">2.6000, 2.2000</span><span class="cell s3">-4.2000, -0.5000</span><span class="cell s4">mm</span><span class="cell s5">A/RF</span><span class="cell s6">SimSchem</span></footer>
</body>
</html>
